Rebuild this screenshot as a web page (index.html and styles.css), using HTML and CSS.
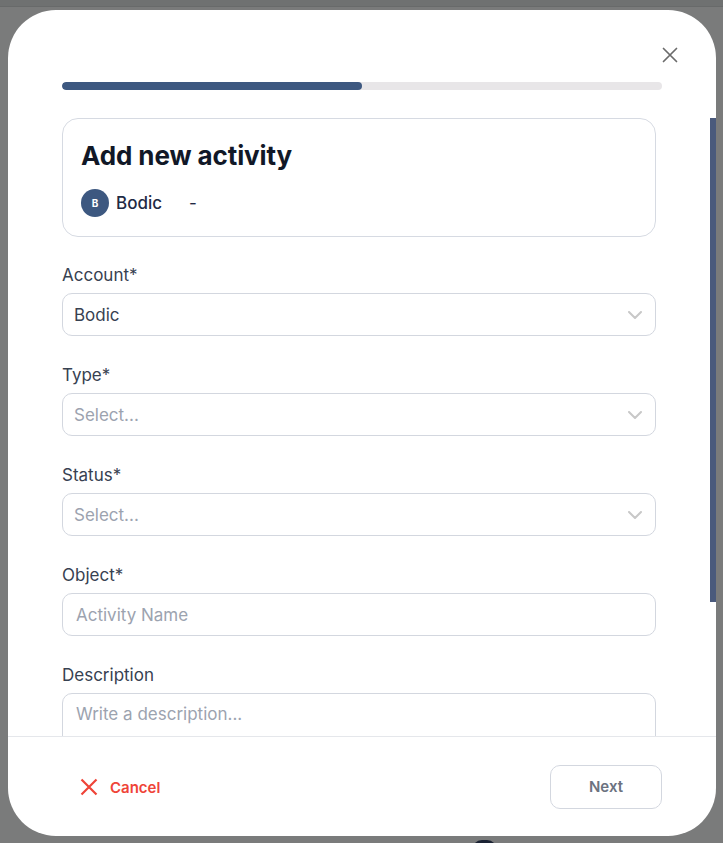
FILE: index.html
```html
<!DOCTYPE html>
<html>
<head>
<meta charset="utf-8">
<link rel="stylesheet" href="styles.css">
</head>
<body>
<div class="topstrip"></div>
<div class="stage">
  <div class="modal">
    <div class="modal-main">
      <div class="close-row">
        <button class="close-btn" aria-label="Close">
          <svg width="16" height="16" viewBox="0 0 16 16"><path d="M1.5 1.5 L14.5 14.5 M14.5 1.5 L1.5 14.5" stroke="#6b6b6b" stroke-width="1.7" stroke-linecap="round" fill="none"/></svg>
        </button>
      </div>
      <div class="progress"><div class="progress-fill"></div></div>
      <div class="form">
        <div class="card">
          <h1 class="title">Add new activity</h1>
          <div class="owner">
            <span class="avatar">B</span>
            <span class="owner-name">Bodic</span>
            <span class="owner-dash">-</span>
          </div>
        </div>

        <div class="field">
          <label class="label">Account*</label>
          <div class="input select">
            <span class="value">Bodic</span>
            <svg class="chev" width="14" height="8" viewBox="0 0 14 8"><path d="M1 1 L7 7 L13 1" stroke="#c8c8c8" stroke-width="2" fill="none" stroke-linecap="round" stroke-linejoin="round"/></svg>
          </div>
        </div>

        <div class="field">
          <label class="label">Type*</label>
          <div class="input select">
            <span class="placeholder">Select...</span>
            <svg class="chev" width="14" height="8" viewBox="0 0 14 8"><path d="M1 1 L7 7 L13 1" stroke="#c8c8c8" stroke-width="2" fill="none" stroke-linecap="round" stroke-linejoin="round"/></svg>
          </div>
        </div>

        <div class="field">
          <label class="label">Status*</label>
          <div class="input select">
            <span class="placeholder">Select...</span>
            <svg class="chev" width="14" height="8" viewBox="0 0 14 8"><path d="M1 1 L7 7 L13 1" stroke="#c8c8c8" stroke-width="2" fill="none" stroke-linecap="round" stroke-linejoin="round"/></svg>
          </div>
        </div>

        <div class="field">
          <label class="label">Object*</label>
          <div class="input text">
            <span class="placeholder">Activity Name</span>
          </div>
        </div>

        <div class="field">
          <label class="label">Description</label>
          <div class="input textarea">
            <span class="placeholder">Write a description...</span>
          </div>
        </div>
      </div>
      <div class="scroll-thumb"></div>
    </div>
    <div class="footer">
      <button class="cancel-btn">
        <svg width="18" height="18" viewBox="0 0 18 18"><path d="M1.5 1.5 L16.5 16.5 M16.5 1.5 L1.5 16.5" stroke="#ef4438" stroke-width="2.2" fill="none"/></svg>
        <span>Cancel</span>
      </button>
      <button class="next-btn">Next</button>
    </div>
  </div>
  <div class="bottom-pill"></div>
</div>
</body>
</html>
```
FILE: styles.css
```css
* { box-sizing: border-box; }
html, body {
  margin: 0;
  padding: 0;
  height: 100%;
  overflow: hidden;
}
body {
  background: #7a7b7b;
  font-family: Inter, "Noto Sans", sans-serif;
}
.topstrip {
  height: 7px;
  background: #6f7171;
  border-bottom: 1px solid #686a6a;
}
.stage {
  position: relative;
  padding: 3px 0 0 8px;
}
.modal {
  width: 708px;
  height: 826px;
  background: #fff;
  border-radius: 48px;
  display: flex;
  flex-direction: column;
  overflow: hidden;
  position: relative;
}
.modal-main {
  flex: 1;
  overflow: hidden;
  position: relative;
}
.close-row {
  display: flex;
  justify-content: flex-end;
  padding: 37px 38px 0 0;
  height: 53px;
}
.close-btn {
  width: 16px;
  height: 16px;
  padding: 0;
  border: 0;
  background: none;
  display: block;
}
.close-btn svg { display: block; }
.progress {
  margin: 19px 0 0 54px;
  width: 600px;
  height: 8px;
  border-radius: 4px;
  background: #e8e6e8;
  overflow: hidden;
}
.progress-fill {
  width: 300px;
  height: 100%;
  background: #3d5880;
  border-radius: 4px;
}
.form {
  padding: 28px 60px 0 54px;
}
.card {
  border: 1px solid #d6dae2;
  border-radius: 16px;
  padding: 21px 18px 19px;
  height: 119px;
}
.title {
  margin: 0;
  font-size: 26px;
  line-height: 32px;
  font-weight: 700;
  color: #111827;
  letter-spacing: -0.1px;
}
.owner {
  display: flex;
  align-items: center;
  margin-top: 17px;
  height: 28px;
}
.avatar {
  width: 28px;
  height: 28px;
  border-radius: 50%;
  background: #3d5880;
  color: #fff;
  font-size: 10px;
  font-weight: 700;
  display: flex;
  align-items: center;
  justify-content: center;
}
.owner-name {
  margin-left: 7px;
  font-size: 17px;
  color: #1f2a44;
  font-weight: 500;
}
.owner-dash {
  margin-left: 27px;
  font-size: 17px;
  color: #1f2a44;
}
.field {
  margin-top: 26px;
}
.field + .field {
  margin-top: 27px;
}
.label {
  display: block;
  font-size: 17px;
  line-height: 24px;
  color: #374151;
  margin-bottom: 6px;
}
.input {
  height: 43px;
  border: 1px solid #d3d7df;
  border-radius: 10px;
  display: flex;
  align-items: center;
  padding: 0 13px 0 11px;
  font-size: 17px;
}
.input.text { padding-left: 13px; }
.input.textarea {
  height: 100px;
  align-items: flex-start;
  padding: 10px 13px;
}
.select { justify-content: space-between; }
.value { color: #374151; }
.placeholder { color: #9ca3af; }
.chev { display: block; }
.scroll-thumb {
  position: absolute;
  right: 0;
  top: 108px;
  width: 6px;
  height: 484px;
  background: #4a5a7c;
}
.footer {
  height: 100px;
  border-top: 1px solid #e5e7eb;
  display: flex;
  align-items: center;
  justify-content: space-between;
  padding: 0 54px 0 54px;
  flex-shrink: 0;
}
.cancel-btn {
  display: flex;
  align-items: center;
  gap: 12px;
  border: 0;
  background: none;
  padding: 0 0 0 18px;
  color: #ef4438;
  font-family: Inter, "Noto Sans", sans-serif;
  font-size: 15px;
  font-weight: 600;
  margin-top: 1px;
}
.cancel-btn svg { display: block; }
.next-btn {
  width: 112px;
  height: 44px;
  border: 1px solid #d3d7df;
  border-radius: 10px;
  background: #fff;
  color: #6b7280;
  font-family: Inter, "Noto Sans", sans-serif;
  font-size: 15px;
  font-weight: 600;
}
.bottom-pill {
  position: absolute;
  left: 472px;
  top: 833px;
  width: 25px;
  height: 20px;
  border-radius: 10px;
  background: #1a2233;
}
```
